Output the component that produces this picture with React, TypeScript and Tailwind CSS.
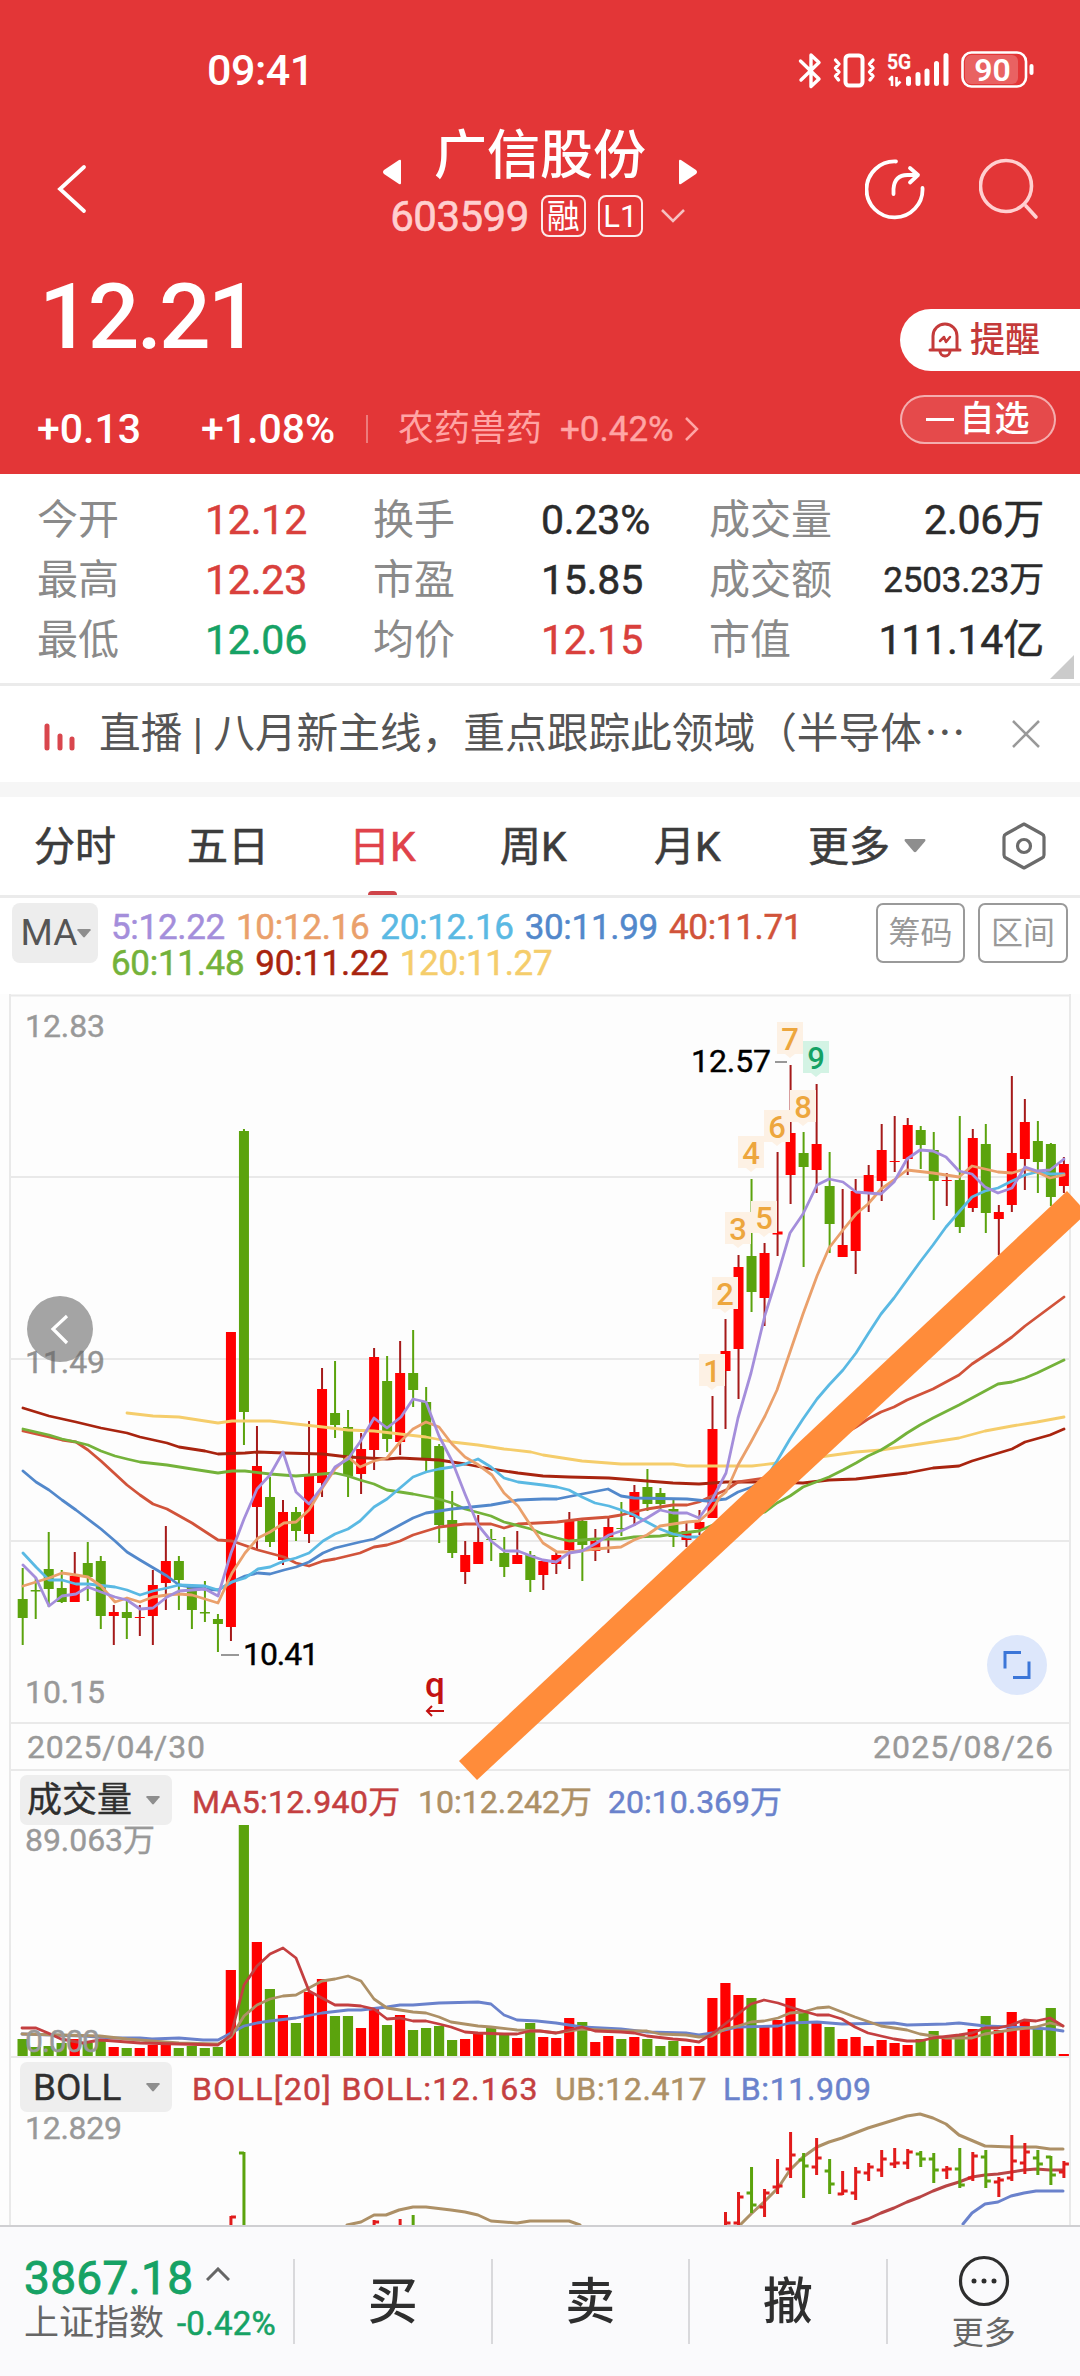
import type { ReactNode } from 'react'

const STEP = 13.015
const barX = (index: number) => 22.7 + index * STEP

const UP = '#ff0000'
const DOWN = '#5ba30d'

// [direction, high, body top, body bottom, low]
const candles: [string, number, number, number, number][] = [
  ['d', 568, 599, 618, 645], ['d', 577, 590, 591.5, 619], ['d', 532, 569, 589, 607], ['d', 570, 588, 602, 603],
  ['u', 552, 576, 602, 602], ['d', 542, 563, 577, 601], ['d', 556, 561, 616, 629], ['u', 605, 612, 616, 645],
  ['d', 601, 612, 618, 639], ['u', 605, 617, 618, 636], ['u', 570, 585, 616, 645], ['u', 526, 561, 583, 610],
  ['d', 556, 561, 580, 610], ['d', 584, 587, 610, 629], ['d', 581, 612, 613.5, 622], ['d', 614, 619, 624, 652],
  ['u', 332, 332, 627, 641], ['d', 129, 131, 412, 445], ['u', 426, 466, 507, 549], ['d', 477, 497, 542, 547],
  ['u', 500, 512, 560, 565], ['d', 507, 512, 531, 541], ['u', 421, 476, 534, 543], ['u', 368, 389, 483, 497],
  ['d', 361, 413, 425, 438], ['d', 410, 427, 476, 497], ['u', 433, 449, 474, 494], ['u', 348, 357, 450, 470],
  ['d', 356, 381, 439, 452], ['u', 341, 373, 442, 455], ['d', 330, 373, 390, 407], ['d', 387, 402, 459, 471],
  ['d', 444, 446, 525, 543], ['d', 491, 520, 553, 558], ['u', 541, 555, 572, 584], ['u', 515, 542, 564, 564],
  ['d', 529, 539, 540, 561], ['d', 537, 553, 567, 577], ['u', 531, 555, 564, 564], ['d', 551, 555, 580, 592],
  ['u', 560, 561, 575, 590], ['u', 552, 555, 564, 574], ['u', 512, 520, 550, 569], ['d', 518, 521, 545, 581],
  ['u', 529, 541, 551, 561], ['u', 518, 527, 537, 553], ['d', 502, 528, 529, 536], ['u', 485, 492, 517, 526],
  ['d', 469, 487, 504, 511], ['d', 488, 493, 504, 511], ['d', 500, 509, 537, 547], ['u', 522, 531, 540, 547],
  ['u', 510, 522, 529, 535], ['u', 396, 429, 518, 518], ['u', 319, 351, 371, 429], ['u', 255, 267, 349, 399],
  ['d', 179, 256, 292, 312], ['u', 243, 253, 298, 326], ['u', 152, 231.5, 234.5, 256], ['u', 65, 133, 175, 204],
  ['d', 132, 153, 167, 267], ['u', 84, 144, 170, 193], ['d', 152, 186, 224, 253], ['u', 189, 245, 257, 257],
  ['u', 179, 191, 251, 274], ['u', 165, 175, 192, 212], ['u', 124, 150, 181, 201], ['u', 116, 161, 162, 172],
  ['u', 118, 125, 159, 175], ['d', 126, 130, 145, 169], ['d', 132, 150, 181, 220], ['u', 173, 180, 181, 206],
  ['d', 116, 180, 227, 233], ['u', 129, 138, 208, 212], ['d', 124, 144, 213, 233], ['u', 205, 212, 219, 255],
  ['u', 76, 153, 205, 212], ['u', 99, 122, 159, 190], ['d', 121, 141, 162, 193], ['d', 143, 144, 197, 206],
  ['u', 157, 164, 186, 193],
]

const priceLines = [
  { color: '#f5cd6b', points: '127,413 153,416 179,417 218,423 232,421 270,421 296,424 323,427 348,430 374,431 400,434 426,437 452,442 478,445 504,449 531,452 543,455 582,461 621,464 673,464 687,466 752,466 777,463 827,456 856,452 881,450 920,444 959,438 985,431 1012,426 1037,422 1064,417' },
  { color: '#a8240f', points: '23,408 49,416 76,422 101,428 127,433 140,437 167,443 179,447 205,451 218,454 245,453 258,452 284,453 323,454 348,457 387,459 400,458 439,460 465,464 491,469 518,473 543,476 569,477 609,478 647,481 673,483 699,484 726,482 765,482 803,483 829,480 856,479 881,476 907,473 933,468 959,466 972,461 1012,449 1025,442 1050,435 1064,429' },
  { color: '#d1533a', points: '23,431 49,437 62,440 76,442 88,450 101,461 127,485 140,495 153,504 167,509 192,523 218,540 232,541 258,550 284,557 296,563 309,566 323,561 335,559 360,553 374,547 387,545 400,541 413,535 439,527 465,524 491,524 504,528 518,524 557,522 582,519 609,517 621,515 647,509 673,505 687,505 699,502 712,496 726,490 738,482 765,478 780,470 856,427 868,419 881,412 894,407 907,400 933,389 959,375 972,364 998,347 1012,337 1025,326 1064,297' },
  { color: '#74b23a', points: '23,429 49,435 62,439 76,442 88,445 101,451 115,456 127,459 140,462 167,465 192,469 218,473 232,471 245,471 270,474 296,476 309,475 335,473 348,476 360,480 374,484 387,490 413,494 439,499 452,503 465,509 491,516 504,522 531,529 543,534 557,538 569,541 595,539 621,539 634,537 660,536 673,534 699,531 713,525 738,520 765,512 777,503 790,496 803,487 829,477 843,470 856,463 868,456 881,450 894,442 907,433 920,425 933,418 959,405 972,398 998,384 1012,382 1025,378 1037,373 1064,360' },
  { color: '#5288cb', points: '23,471 36,482 49,490 62,500 76,510 101,529 115,541 127,552 140,560 167,576 179,585 205,589 218,590 232,582 245,576 258,573 270,574 284,570 296,567 309,562 323,553 335,548 360,542 374,539 387,532 400,525 413,518 426,513 452,509 491,505 518,500 543,499 557,499 582,494 608,489 621,496 634,498 687,499 707,501 726,499 738,492 752,487 765,480 850,418 960,315 1064,215' },
  { color: '#5ab9e3', points: '23,553 36,567 49,580 62,580 76,584 88,584 115,587 127,590 140,595 153,591 167,588 179,585 205,586 218,590 232,582 245,578 258,569 270,567 284,561 296,558 309,553 323,541 335,534 348,529 360,521 374,507 387,499 400,488 413,477 426,472 439,469 452,467 465,464 478,459 491,467 504,478 518,482 543,485 557,487 569,490 582,497 595,503 609,506 621,510 634,515 660,529 673,534 687,537 699,537 712,530 738,502 765,480 777,461 790,439 803,419 817,399 829,385 843,370 856,353 868,334 881,314 894,298 920,262 933,245 946,227 959,212 972,197 985,191 998,188 1012,181 1025,175 1037,172 1050,174 1064,174' },
  { color: '#eaa06b', points: '23,586 49,578 62,573 76,575 88,577 101,586 115,602 127,598 140,602 153,597 167,595 179,594 192,595 205,599 218,603 232,573 245,553 258,538 270,532 284,523 296,522 309,510 323,487 335,469 348,457 360,467 374,461 387,458 400,442 413,429 426,422 439,427 452,444 465,457 477,464 492,475 504,493 518,506 531,526 543,543 557,552 569,552 595,549 621,547 634,540 647,535 660,526 687,522 699,521 712,510 720,497 726,492 738,465 751,442 765,416 777,390 790,352 803,314 817,276 829,248 843,230 856,214 868,204 881,189 894,180 907,170 933,173 959,177 972,166 998,172 1012,173 1025,169 1037,172 1050,178 1064,175' },
  { color: '#a48edb', points: '23,565 36,578 49,606 62,596 76,594 88,587 101,592 115,597 127,600 140,609 153,608 167,597 179,591 192,590 205,589 218,596 231,553 244,519 257,489 270,475 283,452 296,492 309,504 322,487 335,467 348,459 360,442 374,418 387,428 401,417 413,399 426,402 439,436 452,461 465,494 478,525 491,541 504,551 518,551 531,556 543,560 556,562 569,553 582,551 595,544 609,535 621,531 634,525 647,518 660,510 673,513 687,513 699,518 712,500 726,473 738,418 751,373 765,315 777,277 790,233 803,214 817,185 829,179 843,182 856,192 868,193 881,194 894,182 907,159 920,150 933,151 946,157 959,171 972,174 985,187 998,193 1012,188 1025,167 1037,171 1050,170 1064,159' },
]

const counts = [
  { n: 1, x: 712, y: 371 }, { n: 2, x: 725, y: 294 }, { n: 3, x: 738, y: 229 },
  { n: 4, x: 751, y: 153 }, { n: 5, x: 764, y: 218 }, { n: 6, x: 777, y: 127 },
  { n: 7, x: 790, y: 39 }, { n: 8, x: 803, y: 107 }, { n: 9, x: 816, y: 58 },
]

const volumes = [
  17, 9, 10, 13, 17, 13, 17, 9, 8, 8, 11, 11, 8, 10, 8, 9, 86, 231, 114, 67, 41, 33, 64, 77, 40, 40, 28,
  48, 31, 41, 26, 28, 30, 16, 17, 22, 29, 22, 18, 33, 19, 18, 38, 34, 14, 20, 17, 19, 17, 10, 15, 10, 10,
  58, 73, 61, 58, 29, 36, 58, 43, 33, 29, 17, 19, 10, 16, 13, 11, 17, 25, 19, 22, 27, 40, 26, 44, 35, 27, 48, 2,
]

const volumeLines = [
  { color: '#6a82cc', points: '22,209 83,211 114,213 140,213 152,214 179,213 203,215 218,215 231,208 244,201 257,198 270,196 296,193 322,188 348,185 361,185 387,182 400,180 413,180 439,178 478,177 491,179 504,190 517,195 537,196 556,198 582,202 621,204 647,207 686,208 699,210 712,208 738,202 778,201 790,198 817,197 842,199 894,198 907,200 946,199 959,198 985,201 1011,202 1050,204 1063,206' },
  { color: '#ad9066', points: '22,209 61,210 100,211 127,214 152,216 179,218 218,219 231,212 244,191 257,180 270,174 283,171 296,170 309,163 322,156 335,154 348,151 361,156 374,174 387,183 413,187 426,188 439,192 451,197 478,201 491,202 517,205 540,206 556,208 582,204 621,206 647,206 660,209 686,210 699,212 712,211 725,204 738,201 751,197 764,196 778,193 790,188 803,187 817,183 829,182 855,192 881,201 907,205 920,209 946,213 972,213 985,209 1011,205 1036,202 1050,198 1063,201' },
  { color: '#c43f40', points: '22,203 36,203 48,208 61,214 83,218 100,215 114,216 140,218 179,219 218,220 231,210 244,160 257,141 270,129 283,123 296,133 309,166 322,173 335,180 348,180 361,181 374,184 387,194 400,193 413,196 426,196 439,199 451,202 465,207 478,208 504,209 517,209 530,206 540,206 556,208 582,202 595,206 621,207 634,208 647,211 673,214 686,215 699,217 712,209 725,199 738,189 751,179 764,175 778,178 790,182 803,186 817,190 829,190 842,194 855,202 868,208 881,211 894,214 907,216 920,216 933,213 959,210 972,208 985,203 998,203 1011,200 1024,195 1036,196 1050,193 1063,201' },
]

// [index, direction, high, open, close, low]
const bollBars: [number, string, number, number, number, number][] = [
  [16, 'u', 104, 130, 104, 130], [17, 'd', 40, 40, 130, 130], [27, 'u', 108, 130, 109, 130], [29, 'u', 107, 130, 130, 130],
  [30, 'd', 103, 130, 130, 130], [54, 'u', 100, 130, 110, 130], [55, 'u', 80, 110, 84, 130], [56, 'd', 55, 80, 92, 99],
  [57, 'u', 77, 94, 80, 103], [58, 'u', 47, 74, 73, 80], [59, 'u', 20, 56, 42, 64], [60, 'd', 41, 47, 53, 84],
  [61, 'u', 26, 54, 45, 61], [62, 'd', 47, 58, 71, 80], [63, 'u', 59, 81, 78, 81], [64, 'u', 55, 80, 59, 86],
  [65, 'u', 51, 60, 54, 67], [66, 'u', 38, 57, 46, 63], [67, 'u', 36, 51, 50, 54], [68, 'u', 37, 50, 39, 55],
  [69, 'd', 39, 41, 46, 53], [70, 'd', 41, 46, 57, 69], [71, 'u', 54, 57, 56, 65], [72, 'd', 36, 56, 72, 74],
  [73, 'u', 40, 65, 43, 67], [74, 'd', 38, 44, 68, 74], [75, 'u', 65, 69, 67, 83], [76, 'u', 23, 65, 48, 67],
  [77, 'u', 31, 50, 39, 60], [78, 'd', 38, 45, 51, 61], [79, 'd', 44, 44, 62, 71], [80, 'u', 49, 59, 51, 64],
]

const bollLines = [
  { color: '#ad9066', points: '347,112 361,109 374,102 386,102 399,97 413,94 426,94 451,97 465,99 478,102 491,108 504,109 517,110 530,108 569,108 580,112' },
  { color: '#ad9066', points: '740,112 751,101 764,89 778,75 790,57 803,44 817,34 829,29 842,25 868,15 907,3 920,1 933,5 946,11 959,22 985,33 1011,34 1036,34 1050,36 1063,36' },
  { color: '#b94545', points: '853,111 868,106 881,100 894,95 907,89 920,84 933,78 946,73 959,69 972,64 985,62 998,61 1024,57 1036,56 1050,57 1063,57' },
  { color: '#6a82cc', points: '963,111 972,100 985,91 998,89 1011,83 1024,80 1036,78 1063,78' },
]

const stats = [
  [['今开', '12.12', 'text-[#d9403c]'], ['换手', '0.23%', 'text-[#2b2b2b]'], ['成交量', '2.06万', 'text-[#2b2b2b]']],
  [['最高', '12.23', 'text-[#d9403c]'], ['市盈', '15.85', 'text-[#2b2b2b]'], ['成交额', '2503.23万', 'text-[#2b2b2b] text-[35px]']],
  [['最低', '12.06', 'text-[#16a265]'], ['均价', '12.15', 'text-[#d9403c]'], ['市值', '111.14亿', 'text-[#2b2b2b]']],
]

function Lines({ lines, width = 3 }: { lines: { color: string; points: string }[]; width?: number }) {
  return (
    <g fill="none" strokeWidth={width} strokeLinejoin="round" strokeLinecap="round">
      {lines.map((line) => <polyline key={line.points} points={line.points} stroke={line.color} />)}
    </g>
  )
}

function AxisLabel({ x, y, width, fill = '#999999', children }: { x: number; y: number; width: number; fill?: string; children: ReactNode }) {
  return <text x={x} y={y} fill={fill} stroke={fill} strokeWidth="0.4" fontSize="32" textLength={width}>{children}</text>
}

function Caret({ className }: { className: string }) {
  return (
    <svg viewBox="0 0 16 10" preserveAspectRatio="none" className={className}>
      <path d="M1 0h14q1 0.5 0.5 1.5L9 9q-1 1-2 0L0.5 1.5Q0 0.5 1 0z" fill="#8e8e8e" />
    </svg>
  )
}

function StatusIcons() {
  return (
    <svg viewBox="796 48 240 42" className="h-[42px] w-[240px]" fill="none" stroke="#fff">
      <path d="M799.500 60l18.500 18-8 7.500V54l8 7.500L800 79" strokeWidth="3.400" strokeLinejoin="round" strokeLinecap="round" />
      <rect x="844.500" y="54.500" width="17" height="30" rx="3.500" strokeWidth="4" />
      <path d="M834.500 59l3.500 4-3.500 4 3.500 4-3.500 4 3 4M872 59l-3.500 4 3.500 4-3.500 4 3.500 4-3 4" strokeWidth="3.400" strokeLinejoin="round" strokeLinecap="round" />
      <text x="886" y="67.500" fill="#fff" stroke="#fff" strokeWidth="0.500" fontSize="21" fontWeight="500" textLength="24" lengthAdjust="spacingAndGlyphs">5G</text>
      <path d="M888 79l3-3v9M895.500 76v8.500l4-4" strokeWidth="2.600" strokeLinejoin="round" />
      <path d="M907.500 82.500v-5M917 82.500v-9M926 82.500V70M935.500 82.500V62.500M945 82.500V54.500" strokeWidth="5" strokeLinecap="round" />
      <rect x="964" y="54" width="53" height="29" rx="6" fill="#ffffff38" stroke="none" />
      <rect x="961.500" y="51.500" width="63.500" height="34" rx="9" strokeWidth="2.600" />
      <path d="M1030.500 65v7" strokeWidth="4" strokeLinecap="round" />
      <text x="991.500" y="79.500" fill="#fff" stroke="none" fontSize="32" fontWeight="600" textAnchor="middle">90</text>
    </svg>
  )
}

function Header() {
  return (
    <header className="h-[474px] bg-[#e33637] text-white">
      <div className="flex h-[124px] items-center justify-between pt-4 pr-[43px] pl-[207px]">
        <span className="text-[43px] font-medium tracking-[-0.500px]">09:41</span>
        <StatusIcons />
      </div>

      <div className="flex h-[114px] pr-[41px] pl-[56px]">
        <svg viewBox="0 0 32 50" className="mt-[40px] h-[50px] w-[32px] shrink-0" fill="none" stroke="#fff" strokeWidth="3.800" strokeLinecap="round">
          <path d="M28 3L4 25l24 22" />
        </svg>
        <div className="ml-[292px] flex w-[320px] flex-col items-center">
          <div className="flex h-[62px] items-center gap-[33px]">
            <svg viewBox="0 0 18 26" className="mt-[34px] h-[26px] w-[18px] shrink-0"><path d="M18 2v22q0 2-2 1L1 15q-2-2 0-4L16 1q2-1 2 1z" fill="#fff" /></svg>
            <h1 className="pt-[2px] text-[53px] leading-[62px] font-medium whitespace-nowrap">广信股份</h1>
            <svg viewBox="0 0 18 26" className="mt-[34px] h-[26px] w-[18px] shrink-0"><path d="M0 2v22q0 2 2 1l15-10q2-2 0-4L2 1Q0 0 0 2z" fill="#fff" /></svg>
          </div>
          <div className="mt-[9px] flex h-[42px] items-center pr-[5px]">
            <span className="text-[42px] tracking-[-0.500px] text-[#ffcfcf] [-webkit-text-stroke:0.6px]">603599</span>
            <span className="ml-[12px] flex h-[42px] w-[45px] items-center justify-center rounded-[8px] border-2 border-white/90 text-[33px] leading-none">融</span>
            <span className="ml-[12px] flex h-[42px] w-[45px] items-center justify-center rounded-[8px] border-2 border-white/90 text-[31px] leading-none">L1</span>
            <svg viewBox="0 0 24 14" className="ml-[18px] h-[14px] w-[24px]" fill="none" stroke="#ffffffb0" strokeWidth="2.500"><path d="M1 1l11 11L23 1" /></svg>
          </div>
        </div>
        <div className="mt-[34px] ml-auto flex h-[62px] gap-[54px]">
          <svg viewBox="0 0 60 62" className="h-[62px] w-[60px]" fill="none" stroke="#fff" strokeWidth="3.800" strokeLinecap="round" strokeLinejoin="round">
            <path d="M31 3.500A28 28 0 1 0 57.500 30" />
            <path d="M28.500 36v-5q1-14 14-14H53M45 10l8 7-8 7.500" />
          </svg>
          <svg viewBox="0 0 60 62" className="h-[62px] w-[60px]" fill="none" stroke="#ffd0d0" strokeWidth="3.600" strokeLinecap="round">
            <circle cx="27" cy="28" r="25.500" />
            <path d="M47 48l10 11" />
          </svg>
        </div>
      </div>

      <div className="flex h-[156px] justify-between pl-[39px]">
        <p className="mt-[26px] text-[91px] leading-[106px] font-medium tracking-[-2.900px]">12.21</p>
        <button className="mt-[71px] flex h-[62px] w-[180px] items-center gap-[8px] rounded-l-full bg-white pl-[28px] text-[35px] font-medium text-[#c43a3a]">
          <svg viewBox="0 0 34 36" className="h-[36px] w-[34px]" fill="none" stroke="currentColor" strokeWidth="3" strokeLinejoin="round" strokeLinecap="round">
            <path d="M2 28h30M5 28V14a12 12 0 0 1 24 0v14M12 29a5 5 0 0 0 10 0" />
            <path d="M12 19l4-4 2 5 4-5" strokeWidth="2.500" />
          </svg>
          <span className="leading-none">提醒</span>
        </button>
      </div>

      <div className="flex h-[70px] items-center pl-[37px] text-[41px] leading-none">
        <span className="w-[164px] font-medium">+0.13</span>
        <span className="w-[165px] font-medium">+1.08%</span>
        <i className="h-[28px] w-[2px] bg-white/35" />
        <span className="ml-[30px] text-[36px] text-[#ffa5a5]">农药兽药</span>
        <span className="ml-[18px] text-[35px] text-[#ffa5a5] [-webkit-text-stroke:0.4px]">+0.42%</span>
        <svg viewBox="0 0 14 24" className="ml-[11px] h-[24px] w-[14px]" fill="none" stroke="#ffa5a5" strokeWidth="2.500"><path d="M1 1l11 11L1 23" /></svg>
        <button className="mr-[24px] mb-[20px] ml-auto flex h-[49px] w-[156px] items-center justify-center rounded-full border-2 border-white/55 bg-white/10 text-[35px] font-medium">
          <i className="mr-[5px] h-[3px] w-[28px] bg-white" />
          自选
        </button>
      </div>
    </header>
  )
}

function Stats() {
  return (
    <section className="relative h-[212px] border-b-[3px] border-[#ebebeb] pt-[17px] text-[41px]">
      {stats.map((row) => (
        <div key={row[0][0]} className="flex h-[60px] items-center pr-[36px] pl-[37px]">
          {row.map(([label, value, tone], i) => (
            <div key={label} className={i === 2 ? 'flex flex-1 items-center justify-between' : 'flex w-[336px] items-center'}>
              <span className={i === 2 ? 'text-[#8a8a8a]' : 'w-[168px] text-[#8a8a8a]'}>{label}</span>
              <span className={`tracking-[-0.200px] [-webkit-text-stroke:0.5px] ${tone}`}>{value}</span>
            </div>
          ))}
        </div>
      ))}
      <svg viewBox="0 0 24 24" className="absolute right-[6px] bottom-[4px] size-[24px]"><path d="M24 0v24H0z" fill="#cbcbcb" /></svg>
    </section>
  )
}

function Notice() {
  return (
    <section className="flex h-[111px] items-center border-b-[15px] border-[#f6f6f6] pr-[40px] pl-[44px] text-[41.700px] text-[#555555]">
      <svg viewBox="0 0 32 28" className="mt-[6px] h-[28px] w-[32px]" stroke="#d9464d" strokeWidth="5" strokeLinecap="round">
        <path d="M3 3v22M16 13v12M28 16v9" />
      </svg>
      <p className="ml-[23px] flex-1 overflow-hidden whitespace-nowrap">直播 | 八月新主线，重点跟踪此领域（半导体<span className="ml-[2px]">⋯</span></p>
      <svg viewBox="0 0 28 28" className="size-[28px]" fill="none" stroke="#999999" strokeWidth="2.500"><path d="M1 1l26 26M27 1L1 27" /></svg>
    </section>
  )
}

function Tabs() {
  return (
    <nav className="flex h-[101px] items-center border-b-[3px] border-[#ebebeb] pl-[34px] text-[41px] text-[#3c3c3c] [-webkit-text-stroke:0.6px]">
      <span className="w-[153px] pt-[3px]">分时</span>
      <span className="w-[162px] pt-[3px]">五日</span>
      <span className="relative flex h-full w-[151px] items-center pt-[3px] text-[#e0424a]">
        日K
        <i className="absolute bottom-0 left-[19px] h-[4px] w-[29px] rounded-t-full bg-[#cf4449]" />
      </span>
      <span className="w-[154px] pt-[3px]">周K</span>
      <span className="w-[154px] pt-[3px]">月K</span>
      <span className="pt-[3px]">更多</span>
      <Caret className="ml-[14px] h-[14px] w-[22px]" />
      <svg viewBox="0 0 44 48" className="ml-[76px] h-[48px] w-[44px]" fill="none" stroke="#6b6b6b" strokeWidth="3.200" strokeLinejoin="round">
        <path d="M22 2l18 10q2 1 2 3v18q0 2-2 3L22 46 4 36q-2-1-2-3V15q0-2 2-3z" />
        <circle cx="22" cy="24" r="6.500" />
      </svg>
    </nav>
  )
}

function AverageLegend() {
  return (
    <div className="flex h-[96px] items-start pt-[5px] pr-[12px] pl-[12px]">
      <div className="flex h-[60px] w-[86px] items-center justify-center rounded-[8px] bg-[#ededed] pl-[2px] text-[37px] text-[#555555]">
        MA
        <Caret className="h-[9px] w-[14px]" />
      </div>
      <div className="mt-[7px] ml-[13px] flex-1 text-[35px] leading-[36px] tracking-[-0.300px] whitespace-nowrap [-webkit-text-stroke:0.5px]">
        <p className="flex gap-[11px]">
          <span className="text-[#a48edb]">5:12.22</span>
          <span className="text-[#eaa06b]">10:12.16</span>
          <span className="text-[#5ab9e3]">20:12.16</span>
          <span className="text-[#5288cb]">30:11.99</span>
          <span className="text-[#d1533a]">40:11.71</span>
        </p>
        <p className="flex gap-[11px]">
          <span className="text-[#74b23a]">60:11.48</span>
          <span className="text-[#a8240f]">90:11.22</span>
          <span className="text-[#f5cd6b]">120:11.27</span>
        </p>
      </div>
      <button className="mr-[13px] h-[60px] w-[89px] rounded-[7px] border-[2.500px] border-[#9a9a9a] text-[32px] leading-none text-[#999999]">筹码</button>
      <button className="h-[60px] w-[90px] rounded-[7px] border-[2.500px] border-[#9a9a9a] text-[32px] leading-none text-[#999999]">区间</button>
    </div>
  )
}

function PriceChart() {
  return (
    <svg viewBox="0 -6 1080 777" className="relative z-10 block h-[777px] w-[1080px] overflow-visible">
      <g stroke="#e9e9e9" strokeWidth="2">
        <path d="M9 -4.500H1071M10 177H1070M10 359H1070M10 541H1070M10 723H1070M10 770H1070" />
      </g>

      <AxisLabel x={25} y={37} width={80}>12.83</AxisLabel>
      <AxisLabel x={25} y={703} width={80}>10.15</AxisLabel>
      <AxisLabel x={27} y={758} width={178}>2025/04/30</AxisLabel>
      <AxisLabel x={873} y={758} width={180}>2025/08/26</AxisLabel>

      {candles.map(([dir, high, top, bottom, low], i) => (
        <g key={i} fill={dir === 'u' ? UP : DOWN}>
          <rect x={barX(i) - 1} y={high} width="2" height={low - high} fill={dir === 'u' ? '#a51a1a' : DOWN} />
          <rect x={barX(i) - 5} y={top} width="10" height={bottom - top} />
        </g>
      ))}
      <Lines lines={priceLines} width={2.8} />

      <circle cx="60" cy="329" r="33" fill="#a4a4a4" />
      <path d="M67 316l-14 13 14 14" fill="none" stroke="#fff" strokeWidth="3.200" />
      <text x="25" y="373" fontSize="32" fill="#666666" stroke="#666666" strokeWidth="0.4" opacity="0.7" textLength="80">11.49</text>

      {counts.map(({ n, x, y }) => (
        <g key={n}>
          <path d={`M${x - 13} ${y - 17}h26v32h-8l-5 4-5-4h-8z`} fill={n === 9 ? '#d3f3e4' : '#fdf1e4'} />
          <text x={x} y={y + 11} textAnchor="middle" fontSize="31" fontWeight="500" fill={n === 9 ? '#16a265' : '#eda63d'}>{n}</text>
        </g>
      ))}

      <path d="M221 655h18M775 62h12" stroke="#777777" strokeWidth="1.500" />
      <AxisLabel x={243} y={665} width={76} fill="#000000">10.41</AxisLabel>
      <AxisLabel x={691} y={72} width={80} fill="#000000">12.57</AxisLabel>

      <text x="435" y="697" fontSize="35" fontWeight="500" fill="#c31212" textAnchor="middle">q</text>
      <path d="M444 711h-17M432 706l-5 5 5 5" fill="none" stroke="#c31212" strokeWidth="2" />

      <circle cx="1017" cy="665" r="30" fill="#dde7fb" />
      <path d="M1021 652.500h-16v16M1013 677.500h16v-16" fill="none" stroke="#3b76d8" strokeWidth="3" />

      <path d="M459 761L1067 191L1087 213L477 780z" fill="#ff8c3a" />
    </svg>
  )
}

function PanelHeader({ name, children }: { name: string; children: ReactNode }) {
  return (
    <div className="flex h-[54px] items-center pt-[4px] pl-[9px]">
      <div className="flex h-[50px] w-[152px] shrink-0 items-center justify-between rounded-[7px] bg-[#eeeeee] pr-[12px] pl-[7px] text-[35px] text-[#2f2f2f]">
        <span className={name === 'BOLL' ? 'pt-[2px] pl-[6px] text-[37px] [-webkit-text-stroke:0.4px]' : 'pt-[2px] [-webkit-text-stroke:0.4px]'}>{name}</span>
        <Caret className="h-[9px] w-[14px]" />
      </div>
      <div className="flex pt-[3px] pl-[20px] text-[32px] whitespace-nowrap [-webkit-text-stroke:0.5px]">{children}</div>
    </div>
  )
}

function VolumePanel() {
  return (
    <section className="mx-[9px] h-[287px] border-x-2 border-[#e9e9e9]">
      <PanelHeader name="成交量">
        <span className="w-[226px] tracking-[0.300px] text-[#c43f40]">MA5:12.940万</span>
        <span className="w-[190px] text-[#ad9066]">10:12.242万</span>
        <span className="text-[#6a82cc]">20:10.369万</span>
      </PanelHeader>
      <svg viewBox="11 0 1058 233" className="block h-[233px] w-[1058px] overflow-visible">
        <path d="M11 232H1069" stroke="#e9e9e9" strokeWidth="2" />
        {volumes.map((height, i) => (
          <rect key={i} x={barX(i) - 5.2} y={231 - height} width="10.2" height={height} fill={candles[i][0] === 'u' ? UP : DOWN} />
        ))}
        <Lines lines={volumeLines} width={2.8} />
        <AxisLabel x={25} y={26} width={130}>89.063万</AxisLabel>
        <AxisLabel x={25} y={227} width={75}>0.000</AxisLabel>
      </svg>
    </section>
  )
}

function BollPanel() {
  return (
    <section className="mx-[9px] h-[167px] overflow-hidden border-x-2 border-[#e9e9e9]">
      <PanelHeader name="BOLL">
        <span className="w-[363px] tracking-[1.350px] text-[#c43f40]">BOLL[20] BOLL:12.163</span>
        <span className="w-[168px] tracking-[0.600px] text-[#ad9066]">UB:12.417</span>
        <span className="tracking-[0.600px] text-[#6a82cc]">LB:11.909</span>
      </PanelHeader>
      <svg viewBox="11 -1 1058 113" className="block h-[113px] w-[1058px] overflow-visible">
        <Lines lines={bollLines} />
        {bollBars.map(([index, dir, high, open, close, low]) => {
          const x = barX(index)
          return (
            <path key={index} fill="none" stroke={dir === 'u' ? '#e11b1b' : DOWN} strokeWidth="3"
              d={`M${x} ${high - 1}V${low + 1}M${x - 5} ${open}H${x}M${x} ${close}h5`} />
          )
        })}
        <AxisLabel x={25} y={26} width={97}>12.829</AxisLabel>
      </svg>
    </section>
  )
}

function BottomBar() {
  return (
    <footer className="flex h-[151px] border-t-2 border-[#cfcfd2] bg-[#fafafc] text-[#2e2e2e]">
      <div className="w-[293px] pt-[25px] pl-[24px] whitespace-nowrap">
        <div className="flex h-[52px] items-center text-[46px] leading-[52px] tracking-[0.300px] text-[#16a265] [-webkit-text-stroke:0.9px]">
          3867.18
          <svg viewBox="0 0 24 14" className="mb-[8px] ml-[13px] h-[14px] w-[24px]" fill="none" stroke="#666666" strokeWidth="3"><path d="M1 13L12 2l11 11" /></svg>
        </div>
        <div className="flex h-[40px] items-center text-[35px] leading-[40px] text-[#666666]">
          上证指数
          <span className="ml-[13px] text-[33px] tracking-[0.200px] text-[#16a265] [-webkit-text-stroke:0.6px]">-0.42%</span>
        </div>
      </div>
      {['买', '卖', '撤'].map((action) => (
        <button key={action} className="mt-[32px] h-[85px] w-[197.500px] border-l-2 border-[#d9d9dc] text-[50px] leading-none font-medium">{action}</button>
      ))}
      <div className="mt-[32px] flex h-[85px] flex-1 flex-col items-center border-l-2 border-[#d9d9dc]">
        <svg viewBox="0 0 52 52" className="-mt-[4px] size-[52px] shrink-0">
          <circle cx="26" cy="26" r="23.500" fill="none" stroke="#2e2e2e" strokeWidth="3.200" />
          <path d="M16 26h.01M26 26h.01M36 26h.01" stroke="#2e2e2e" strokeWidth="5" strokeLinecap="round" />
        </svg>
        <span className="mt-[6px] text-[32px] leading-[40px] text-[#666666]">更多</span>
      </div>
    </footer>
  )
}

export default function App() {
  return (
    <main className="w-[1080px] overflow-hidden bg-white font-['Roboto','Noto_Sans_CJK_SC',sans-serif]">
      <Header />
      <Stats />
      <Notice />
      <Tabs />
      <AverageLegend />
      <div className="bg-[#fdfdfd]">
        <div className="bg-[linear-gradient(#e9e9e9,#e9e9e9),linear-gradient(#e9e9e9,#e9e9e9)] bg-[length:2px_100%] bg-[position:9px_0,1069px_0] bg-no-repeat">
          <PriceChart />
        </div>
        <VolumePanel />
        <BollPanel />
      </div>
      <BottomBar />
    </main>
  )
}
